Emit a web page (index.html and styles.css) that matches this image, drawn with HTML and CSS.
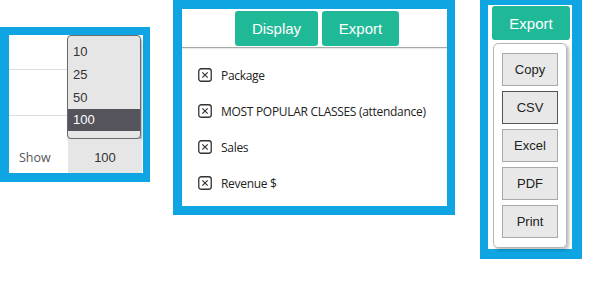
FILE: index.html
```html
<!DOCTYPE html>
<html lang="en">
<head>
    <meta charset="UTF-8">
    <meta name="viewport" content="width=device-width, initial-scale=1.0">
    <title>Table controls</title>
    <link rel="stylesheet" href="styles.css">
</head>
<body>
    <div class="shots">
        <!-- page length select -->
        <div class="frame frame-length">
            <div class="length-top">
                <div class="rows">
                    <div class="row"></div>
                    <div class="row"></div>
                    <div class="row"></div>
                </div>
                <ul class="length-list">
                    <li>10</li>
                    <li>25</li>
                    <li>50</li>
                    <li class="active">100</li>
                </ul>
            </div>
            <div class="length-bottom">
                <span class="show">Show</span>
                <span class="length-value">100</span>
            </div>
        </div>

        <!-- column visibility -->
        <div class="frame frame-display">
            <div class="tabs">
                <button class="green-btn btn-display">Display</button>
                <button class="green-btn btn-export">Export</button>
            </div>
            <ul class="col-list">
                <li><span class="check"><svg width="14" height="14" viewBox="0 0 14 14"><rect x="0.75" y="0.75" width="12.5" height="12.5" rx="2.5" fill="none" stroke="#333" stroke-width="1.3"/><path d="M4.3 4.3 L9.7 9.7 M9.7 4.3 L4.3 9.7" stroke="#333" stroke-width="1.2"/></svg></span>Package</li>
                <li><span class="check"><svg width="14" height="14" viewBox="0 0 14 14"><rect x="0.75" y="0.75" width="12.5" height="12.5" rx="2.5" fill="none" stroke="#333" stroke-width="1.3"/><path d="M4.3 4.3 L9.7 9.7 M9.7 4.3 L4.3 9.7" stroke="#333" stroke-width="1.2"/></svg></span>MOST POPULAR CLASSES (attendance)</li>
                <li><span class="check"><svg width="14" height="14" viewBox="0 0 14 14"><rect x="0.75" y="0.75" width="12.5" height="12.5" rx="2.5" fill="none" stroke="#333" stroke-width="1.3"/><path d="M4.3 4.3 L9.7 9.7 M9.7 4.3 L4.3 9.7" stroke="#333" stroke-width="1.2"/></svg></span>Sales</li>
                <li><span class="check"><svg width="14" height="14" viewBox="0 0 14 14"><rect x="0.75" y="0.75" width="12.5" height="12.5" rx="2.5" fill="none" stroke="#333" stroke-width="1.3"/><path d="M4.3 4.3 L9.7 9.7 M9.7 4.3 L4.3 9.7" stroke="#333" stroke-width="1.2"/></svg></span>Revenue $</li>
            </ul>
        </div>

        <!-- export menu -->
        <div class="frame frame-export">
            <button class="green-btn btn-export-only">Export</button>
            <div class="export-menu">
                <button class="gray-btn">Copy</button>
                <button class="gray-btn focus">CSV</button>
                <button class="gray-btn">Excel</button>
                <button class="gray-btn">PDF</button>
                <button class="gray-btn">Print</button>
            </div>
        </div>
    </div>
</body>
</html>
```

FILE: styles.css
```css
body {
    margin: 0;
    background: #fff;
    font-family: "Liberation Sans", Arial, sans-serif;
}
ul {
    list-style: none;
    margin: 0;
    padding: 0;
}
button {
    font-family: "Liberation Sans", Arial, sans-serif;
    cursor: pointer;
}
.shots {
    display: flex;
    align-items: flex-start;
}
.frame {
    border: 8px solid #0ea5e2;
    background: #fff;
    box-sizing: border-box;
}

/* length select */
.frame-length {
    margin-top: 27px;
    width: 150px;
    height: 155px;
    border-width: 8px 7px 9px 9px;
}
.length-top {
    display: flex;
    height: 104px;
}
.rows {
    width: 58px;
}
.row {
    height: 34px;
    border-bottom: 1px solid #ddd;
}
.row:nth-child(2) {
    height: 45px;
}
.row:nth-child(3) {
    border-bottom: none;
}
.length-list {
    width: 74px;
    box-sizing: border-box;
    background: #e6e6e6;
    border: 1px solid #6a6a6a;
    border-radius: 4px;
    padding: 4px 0 5px;
    box-shadow: 1px 3px 2px rgba(0, 0, 0, 0.35);
    font-size: 13px;
    color: #333;
}
.length-list li {
    height: 23px;
    line-height: 23px;
    padding-left: 5px;
}
.length-list li.active {
    background: #55535b;
    color: #fff;
    height: 22px;
    line-height: 22px;
}
.length-bottom {
    display: flex;
    height: 34px;
    align-items: stretch;
}
.show {
    width: 59px;
    box-sizing: border-box;
    padding-left: 10px;
    line-height: 38px;
    font-family: "Open Sans", sans-serif;
    font-size: 12.5px;
    color: #555;
}
.length-value {
    width: 74px;
    background: #e6e6e6;
    text-align: center;
    line-height: 38px;
    font-size: 13px;
    color: #333;
}

/* column visibility */
.frame-display {
    margin-left: 23px;
    width: 282px;
    height: 215px;
    border-width: 9px 8px 9px 9px;
}
.tabs {
    display: flex;
    gap: 4px;
    padding: 2px 0 0 53px;
    height: 39px;
    box-sizing: border-box;
    border-bottom: 1px solid #a8a8a8;
    box-shadow: 0 1px 1px rgba(0, 0, 0, 0.08);
}
.green-btn {
    background: #20b998;
    color: #fff;
    border: none;
    border-radius: 3px;
    font-size: 15px;
    padding: 0;
}
.btn-display {
    width: 83px;
    height: 35px;
}
.btn-export {
    width: 77px;
    height: 35px;
}
.col-list {
    padding-top: 9px;
    font-family: "Open Sans", sans-serif;
    font-size: 12px;
    letter-spacing: -0.3px;
    color: #222;
}
.col-list li {
    display: flex;
    align-items: center;
    height: 36px;
    padding-left: 16px;
}
.check {
    display: flex;
    flex-shrink: 0;
    margin-right: 9px;
}

/* export menu */
.frame-export {
    margin-left: 25px;
    width: 102px;
    height: 259px;
    border-width: 5px 10px 10px 8px;
    padding: 1px 2px 0 4px;
}
.btn-export-only {
    width: 78px;
    height: 34px;
    display: block;
}
.export-menu {
    margin: 3px 0 0 1px;
    width: 74px;
    box-sizing: border-box;
    border: 1px solid #b5b5b5;
    border-radius: 5px;
    padding: 9px 0 9px 8px;
    display: flex;
    flex-direction: column;
    gap: 5px;
    box-shadow: 2px 2px 3px rgba(0, 0, 0, 0.25);
}
.gray-btn {
    width: 56px;
    height: 33px;
    background: #e8e8e8;
    border: 1px solid #a9a9a9;
    font-size: 13px;
    color: #222;
    padding: 0;
}
.gray-btn.focus {
    border-color: #555;
}
```
